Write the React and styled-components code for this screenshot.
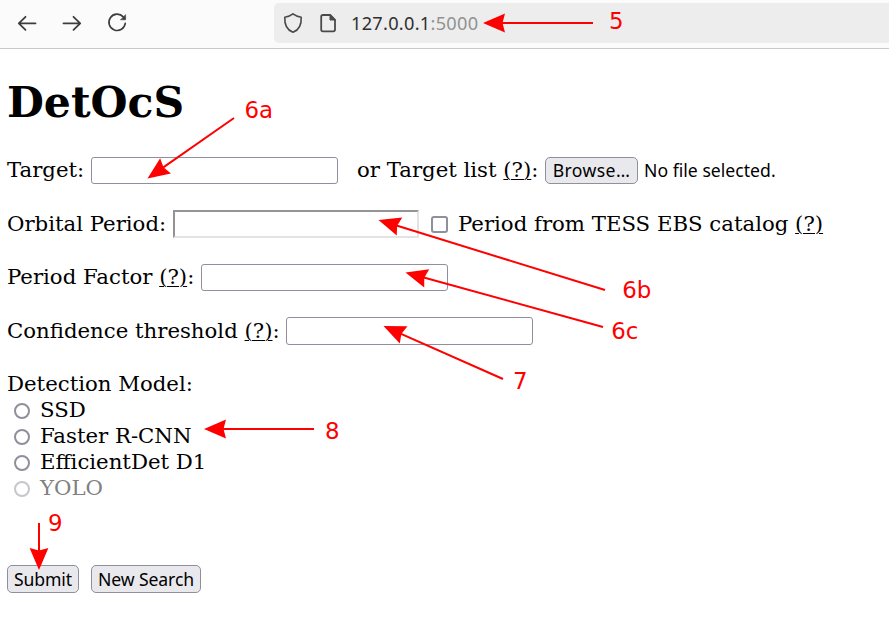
import React from "react";
import styled, { createGlobalStyle } from "styled-components";

const GlobalStyle = createGlobalStyle`
  *, *::before, *::after { box-sizing: border-box; }
  body { margin: 0; background: #fff; overflow: hidden; }
`;

const Window = styled.div`
  position: relative;
  width: 889px;
  height: 618px;
  overflow: hidden;
  background: #fff;
  color: #000;
  font: 21.25px/26px "DejaVu Serif", serif;
`;

const Toolbar = styled.header`
  display: flex;
  align-items: flex-start;
  justify-content: space-between;
  height: 49px;
  padding: 3px 0 0 16px;
  background: #fbfbfb;
  border-bottom: 1px solid #c8c8c8;
`;

const NavButtons = styled.nav`
  display: flex;
  gap: 21px;
  padding-top: 8px;
`;

const NavButton = styled.button`
  display: flex;
  padding: 0;
  border: 0;
  background: none;
  color: #3d3d3d;
`;

const AddressBar = styled.div`
  display: flex;
  align-items: center;
  width: 615px;
  height: 40px;
  padding-left: 7px;
  gap: 11px;
  border-radius: 5px 0 0 5px;
  background: #ededed;
  color: #4a4a4a;
`;

const Url = styled.span`
  white-space: nowrap;
  font: 18.2px/24px "Noto Sans", sans-serif;
  letter-spacing: 0.27px;
  color: #303030;
`;

const Port = styled.span`
  color: #929292;
`;

const Page = styled.main`
  padding: 28px 7px 0;
`;

const Title = styled.h1`
  margin: 0 0 30px;
  font-size: 42.5px;
  line-height: 50px;
  font-weight: bold;
`;

const Field = styled.div`
  display: flex;
  align-items: flex-start;
  height: 28px;
  margin-bottom: ${(p) => p.$gap}px;
  line-height: ${(p) => p.$line || 26}px;
`;

const Label = styled.label`
  flex: none;
  width: ${(p) => p.$width}px;
  white-space: nowrap;
  color: ${(p) => (p.$disabled ? "#808080" : "#000")};
`;

const Help = styled.span`
  text-decoration: underline;
  text-decoration-thickness: 1px;
  text-underline-offset: 2px;
`;

const TextInput = styled.input`
  flex: none;
  width: ${(p) => p.$width || 247}px;
  height: ${(p) => p.$height || 27}px;
  margin-right: ${(p) => p.$after || 0}px;
  padding: 0 4px;
  border: 1px solid #8f8f9d;
  border-radius: 3px;
  background: #fff;
  outline: 0;
`;

const InsetInput = styled(TextInput)`
  border: 2px solid;
  border-color: #949494 #e3e3e3 #e3e3e3 #949494;
  border-radius: 0;
`;

const Checkbox = styled.input.attrs({ type: "checkbox" })`
  appearance: none;
  flex: none;
  width: 17px;
  height: 17px;
  margin: 6px 10px 0 0;
  border: 2px solid #8f8f9d;
  border-radius: 3px;
  background: #fff;
`;

const Button = styled.button`
  flex: none;
  width: ${(p) => p.$width}px;
  height: ${(p) => p.$height || 28}px;
  padding: 0;
  border: 1px solid #8f8f9d;
  border-radius: 5px;
  background: #e9e9ed;
  color: #000;
  white-space: nowrap;
  font: 17.6px/24px "Noto Sans", sans-serif;
  letter-spacing: ${(p) => p.$spacing || 0}px;
`;

const BrowseButton = styled(Button)`
  padding-bottom: 2px;
`;

const FileStatus = styled.span`
  margin-left: 6px;
  white-space: nowrap;
  font: 17.6px/27px "Noto Sans", sans-serif;
  letter-spacing: 0.02px;
`;

const ModelList = styled.div`
  display: flex;
  flex-direction: column;
  height: 194px;
`;

const Option = styled.div`
  display: flex;
  height: 26px;
  padding-left: 7px;
`;

const Radio = styled.input.attrs({ type: "radio", name: "model" })`
  appearance: none;
  flex: none;
  width: 16px;
  height: 16px;
  margin: 6px 10px 0 0;
  border: 2px solid #8f8f9d;
  border-radius: 50%;
  background: #fff;
  opacity: ${(p) => (p.disabled ? 0.5 : 1)};
`;

const ListHeading = styled.div`
  height: 26px;
`;

const Actions = styled.div`
  display: flex;
  gap: 12px;
`;

const Annotations = styled.svg`
  position: absolute;
  inset: 0;
  pointer-events: none;
  font: 22.9px "DejaVu Sans", sans-serif;
  fill: #f00;
`;

const arrows = [
  { id: "5", tip: [483, 23], tail: [593, 23], label: [609, 29] },
  { id: "6a", tip: [147.5, 178.5], tail: [234, 118], label: [244.5, 118] },
  { id: "6b", tip: [378.5, 220], tail: [605, 290], label: [622.3, 298] },
  { id: "6c", tip: [405.5, 272.5], tail: [603, 327], label: [611.3, 339] },
  { id: "7", tip: [383.5, 326], tail: [503, 379], label: [513, 389] },
  { id: "8", tip: [204, 429], tail: [314, 429], label: [325, 439] },
  { id: "9", tip: [39, 570], tail: [39, 523], label: [48, 531] },
];

function Arrow({ tip, tail }) {
  const dx = tail[0] - tip[0];
  const dy = tail[1] - tip[1];
  const angle = (Math.atan2(dy, dx) * 180) / Math.PI;
  return (
    <g transform={`translate(${tip[0]} ${tip[1]}) rotate(${angle})`}>
      <path d={`M18 0H${Math.hypot(dx, dy)}`} stroke="#f00" strokeWidth="2" />
      <path d="M0 0L22 -9.4L19.5 0L22 9.4Z" />
    </g>
  );
}

function Icon({ children, size = 24 }) {
  return (
    <svg width={size} height={size} viewBox="0 0 24 24" fill="none" stroke="currentColor"
      strokeWidth="1.8" strokeLinecap="round" strokeLinejoin="round">
      {children}
    </svg>
  );
}

const models = ["SSD", "Faster R-CNN", "EfficientDet D1", "YOLO"];

export default function App() {
  return (
    <Window>
      <GlobalStyle />
      <Toolbar>
        <NavButtons>
          <NavButton aria-label="Back"><Icon><path d="M19.5 12.3H3M9.5 5.8L2.8 12.3L9.5 18.8" /></Icon></NavButton>
          <NavButton aria-label="Forward"><Icon><path d="M2.5 12.3H19M12.5 5.8L19.2 12.3L12.5 18.8" /></Icon></NavButton>
          <NavButton aria-label="Reload">
            <Icon>
              <path d="M17.3 5.9A8.2 8.2 0 1 0 19.3 12.2" strokeWidth="1.6" />
              <path d="M19.6 4V8.8H14.8Z" fill="currentColor" strokeWidth="0.6" />
            </Icon>
          </NavButton>
        </NavButtons>
        <AddressBar>
          <Icon><path d="M12 2.9C14.2 4.6 17 5.7 20.2 6.2C20.6 13.5 17.6 19.2 12 21.3C6.4 19.2 3.4 13.5 3.8 6.2C7 5.7 9.8 4.6 12 2.9Z" strokeWidth="1.6" /></Icon>
          <Icon>
            <path d="M7 4H14.2L19 8.8V18.5Q19 20.3 17.2 20.3H7Q5.2 20.3 5.2 18.5V5.8Q5.2 4 7 4Z" />
            <path d="M14 4V9H19Z" fill="currentColor" strokeWidth="1" />
          </Icon>
          <Url>127.0.0.1<Port>:5000</Port></Url>
        </AddressBar>
      </Toolbar>
      <Page>
        <Title>DetOcS</Title>
        <Field $gap={25}>
          <Label $width={84}>Target:</Label>
          <TextInput $after={19} />
          <Label $width={188}>or Target list <Help>(?)</Help>:</Label>
          <BrowseButton $width={93} $height={27} $spacing={0.4}>Browse…</BrowseButton>
          <FileStatus>No file selected.</FileStatus>
        </Field>
        <Field $gap={26} $line={28}>
          <Label $width={166}>Orbital Period:</Label>
          <InsetInput $width={246} $height={28} $after={12} />
          <Checkbox />
          <Label>Period from TESS EBS catalog <Help>(?)</Help></Label>
        </Field>
        <Field $gap={25}>
          <Label $width={194}>Period Factor <Help>(?)</Help>:</Label>
          <TextInput />
        </Field>
        <Field $gap={26} $line={28}>
          <Label $width={279}>Confidence threshold <Help>(?)</Help>:</Label>
          <TextInput $height={28} />
        </Field>
        <ModelList>
          <ListHeading>Detection Model:</ListHeading>
          {models.map((name) => (
            <Option key={name}>
              <Radio disabled={name === "YOLO"} />
              <Label $disabled={name === "YOLO"}>{name}</Label>
            </Option>
          ))}
        </ModelList>
        <Actions>
          <Button $width={72} $spacing={-0.1}>Submit</Button>
          <Button $width={110} $spacing={-0.1}>New Search</Button>
        </Actions>
      </Page>
      <Annotations width="889" height="618">
        {arrows.map((a) => (
          <g key={a.id}>
            <Arrow tip={a.tip} tail={a.tail} />
            <text x={a.label[0]} y={a.label[1]}>{a.id}</text>
          </g>
        ))}
      </Annotations>
    </Window>
  );
}
